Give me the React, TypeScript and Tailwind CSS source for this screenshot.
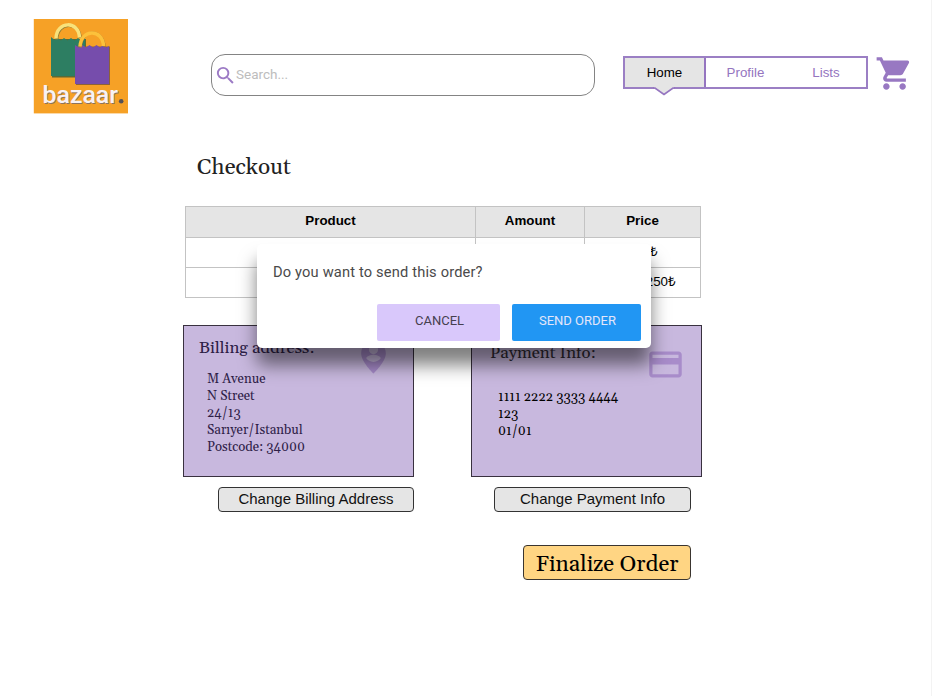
import React from "react";

const serif = "font-[Georgia,Gelasio,'Liberation_Serif',serif]";
const sans = "font-['Liberation_Sans',sans-serif]";

function Logo() {
  return (
    <svg className="block h-[95px] w-[95px]" viewBox="33 19 95 95">
      <rect x="33.8" y="19" width="94.2" height="94.4" fill="#f6a126" />
      <path d="M52 39h34v38.500H52z" fill="#5b6a35" />
      <path d="M51 37l3.500 3 3-2 3.500 2.500 3-2.500 3.500 2.500 3.500-2.500 3.500 2.500 3.500-2.500 3 2.500 4-2.500V76H51z" fill="#2d7e62" />
      <path d="M56.800 39.500C57.500 21 79.500 21 80.300 38" fill="none" stroke="#8b7b35" strokeWidth="3" />
      <path d="M56 38.500C56.500 20.500 79 20.500 79.500 37.500" fill="none" stroke="#f8e27b" strokeWidth="3.500" />
      <path d="M76 46.500h34V85H76z" fill="#8d6237" />
      <path d="M75 45l4 2.500 3.500-2.500 3.500 2.500 3.500-2.500 3.500 2.500 3.500-2.500 3.500 2.500 3.500-2.500 3 2.500 2.500-1.500V84H75z" fill="#764dac" />
      <path d="M80.800 47.500C81.500 28 103.500 28 104.500 47" fill="none" stroke="#a77833" strokeWidth="2.500" />
      <path d="M80 46.500C81 28.500 103 28.500 103.500 46" fill="none" stroke="#fcc13b" strokeWidth="3.500" />
      <g fontFamily="Roboto, sans-serif" fontSize="23.5" fontWeight="500">
        <text x="43.200" y="103.700" textLength="75.5" lengthAdjust="spacingAndGlyphs" fill="#8d735e">bazaar</text>
        <text x="42.500" y="103" textLength="75.5" lengthAdjust="spacingAndGlyphs" fill="#f7f2f4">bazaar</text>
      </g>
      <circle cx="121.200" cy="101.300" r="2.300" fill="#555156" />
    </svg>
  );
}

function Nav() {
  return (
    <nav className={`relative flex h-[33px] w-[245px] border-2 border-[#9b7fc4] text-[13.33px] text-[#9575c0] ${sans}`}>
      <div className="flex w-[81px] justify-center border-r-2 border-[#9575c0] bg-[#e5e5e5] pt-[7px] leading-4 text-black">Home</div>
      <div className="w-[79px] pt-[7px] text-center leading-4">Profile</div>
      <div className="flex-1 pl-px pt-[7px] text-center leading-4">Lists</div>
      <svg className="absolute left-[28px] top-[28px] h-[11px] w-[22px]" viewBox="0 0 22 11">
        <path d="M1 0h20v2l-10 7L1 2z" fill="#e5e5e5" />
        <path d="M0 2h2l9 6.500L20 2h2" fill="none" stroke="#9575c0" strokeWidth="1.700" />
      </svg>
    </nav>
  );
}

function Header() {
  return (
    <header className="flex pl-[33px] pt-[19px]">
      <Logo />
      <div className="ml-[83px] mt-[35px] flex h-[42px] w-[384px] items-center rounded-[14px] border border-[#848484] pl-[2px]">
        <svg className="h-[23px] w-[23px]" viewBox="0 0 24 24" fill="#9c7ac5">
          <path d="M15.500 14h-.79l-.28-.27A6.470 6.470 0 0 0 16 9.500 6.500 6.500 0 1 0 9.500 16c1.610 0 3.090-.59 4.230-1.570l.27.28v.79l5 4.990L20.490 19l-4.990-5zm-6 0C7.010 14 5 11.990 5 9.500S7.010 5 9.500 5 14 7.010 14 9.500 11.990 14 9.500 14z" />
        </svg>
        <span className="-ml-px pb-px font-[Roboto,sans-serif] text-[13.5px] text-[#bdbdbd]">Search...</span>
      </div>
      <div className="ml-[28px] mt-[37px]"><Nav /></div>
      <svg className="ml-[6.500px] mt-[34.500px] h-[39px] w-[39px]" viewBox="0 0 24 24" fill="#9878c2">
        <path d="M7 18c-1.100 0-1.990.9-1.990 2S5.900 22 7 22s2-.9 2-2-.9-2-2-2zM1 2v2h2l3.600 7.590-1.350 2.450c-.16.28-.25.61-.25.960 0 1.100.9 2 2 2h12v-2H7.420c-.14 0-.25-.11-.25-.25l.03-.12.9-1.630h7.450c.75 0 1.410-.41 1.750-1.030l3.580-6.490A1.003 1.003 0 0 0 20 4H5.210l-.94-2H1zm16 16c-1.100 0-1.990.9-1.990 2s.89 2 1.990 2 2-.9 2-2-.9-2-2-2z" />
      </svg>
    </header>
  );
}

function OrderTable() {
  const cell = "border-b border-r border-[#c3c3c3]";
  return (
    <div className={`ml-[185px] grid w-[516px] grid-cols-[290px_109px_1fr] grid-rows-[31px_30px_30px] border-l border-t border-[#c3c3c3] text-center text-[13.33px] leading-4 ${sans}`}>
      {["Product", "Amount", "Price"].map((t) => (
        <div key={t} className={`${cell} bg-[#e5e5e5] pt-[6px] font-bold`}>{t}</div>
      ))}
      <div className={cell} /><div className={cell} />
      <div className={`${cell} pt-[6px]`}>150₺</div>
      <div className={cell} /><div className={cell} />
      <div className={`${cell} pt-[6px] text-right`}><span className="mr-[24px]">1250₺</span></div>
    </div>
  );
}

function Dialog() {
  return (
    <div className="absolute left-[257px] top-[244px] flex h-[104px] w-[394px] flex-col rounded-[5px] bg-white pl-[16px] pr-[10px] pt-[19px] font-[Roboto,sans-serif] shadow-[0_17px_18px_0px_rgba(0,0,0,0.5)]">
      <p className="text-[14.67px] leading-[18px] tracking-[0.16px] text-[#4a4a4a]">Do you want to send this order?</p>
      <div className="mt-[23px] flex justify-end gap-3 text-[13px]">
        <button className="h-[37px] w-[123px] rounded-[2px] bg-[#d9c8fb] pb-1 pl-[2px] text-[#46404f]">CANCEL</button>
        <button className="h-[37px] w-[129px] rounded-[2px] bg-[#2196f3] pb-1 pl-[2px] text-[#e3e6fa]">SEND ORDER</button>
      </div>
    </div>
  );
}

export default function App() {
  return (
    <div className="relative h-[696px] w-[932px] overflow-hidden border-r border-[#f3f3f3] bg-white text-black">
      <Header />
      <h1 className={`ml-[197px] mt-[40px] h-[52px] text-[22.6px] leading-[28px] text-[#222] ${serif}`}>Checkout</h1>
      <OrderTable />
      <section className="ml-[183px] mt-[27px] flex gap-[57px]">
        <div className={`flex h-[152px] w-[231px] justify-between border border-[#39313f] bg-[#c8b8de] text-[#2e2047] ${serif}`}>
          <div className="pl-[15px] pt-[12px]">
            <h2 className="text-[16.8px] leading-[20px]">Billing address:</h2>
            <p className="ml-[8px] mt-[13px] whitespace-pre-line text-[13.1px] leading-[17px]">{"M Avenue\nN Street\n24/13\nSarıyer/Istanbul\nPostcode: 34000"}</p>
          </div>
          <svg className="mr-[21px] mt-[12px] h-[37px] w-[37px]" viewBox="0 0 24 24" fill="#a78bca">
            <path fillRule="evenodd" d="M12 2C7.600 2 4 5.500 4 10c0 5.400 8 13 8 13s8-7.600 8-13c0-4.500-3.600-8-8-8zm0 2.500a3 3 0 1 1 0 6 3 3 0 0 1 0-6zm0 11c-2 0-3.700-.9-4.700-2.300 0-1.500 3.100-2.300 4.700-2.300s4.700.8 4.700 2.300c-1 1.400-2.700 2.300-4.700 2.300z" />
          </svg>
        </div>
        <div className={`flex h-[152px] w-[231px] justify-between border border-[#39313f] bg-[#c8b8de] ${serif}`}>
          <div className="pl-[18px] pt-[17px]">
            <h2 className="text-[16.8px] leading-[20px] text-[#302b35]">Payment Info:</h2>
            <p className="ml-[8px] mt-[26px] whitespace-pre-line text-[13.15px] leading-[17px]">{"1111 2222 3333 4444\n123\n01/01"}</p>
          </div>
          <svg className="mr-[16px] mt-[19px] h-[39px] w-[39px]" viewBox="0 0 24 24" fill="#a88cca">
            <path d="M20 4H4c-1.110 0-1.990.89-1.990 2L2 18c0 1.110.89 2 2 2h16c1.110 0 2-.89 2-2V6c0-1.110-.89-2-2-2zm0 14H4v-6h16v6zm0-10H4V6h16v2z" />
          </svg>
        </div>
      </section>
      <div className={`ml-[218px] mt-[10px] flex gap-[80px] text-[15px] text-[#111] ${sans}`}>
        <button className="h-[25px] w-[196px] rounded-[4px] border border-[#333] bg-[#e5e5e5] pb-[2px] leading-[20px]">Change Billing Address</button>
        <button className="h-[25px] w-[197px] rounded-[4px] border border-[#333] bg-[#e5e5e5] pb-[2px] leading-[20px]">Change Payment Info</button>
      </div>
      <button className={`ml-[523px] mt-[33px] block h-[35px] w-[168px] whitespace-nowrap rounded-[4px] border border-[#3a3530] bg-[#ffd583] pt-[3px] text-[22.5px] leading-[32px] ${serif}`}>Finalize Order</button>
      <Dialog />
    </div>
  );
}
